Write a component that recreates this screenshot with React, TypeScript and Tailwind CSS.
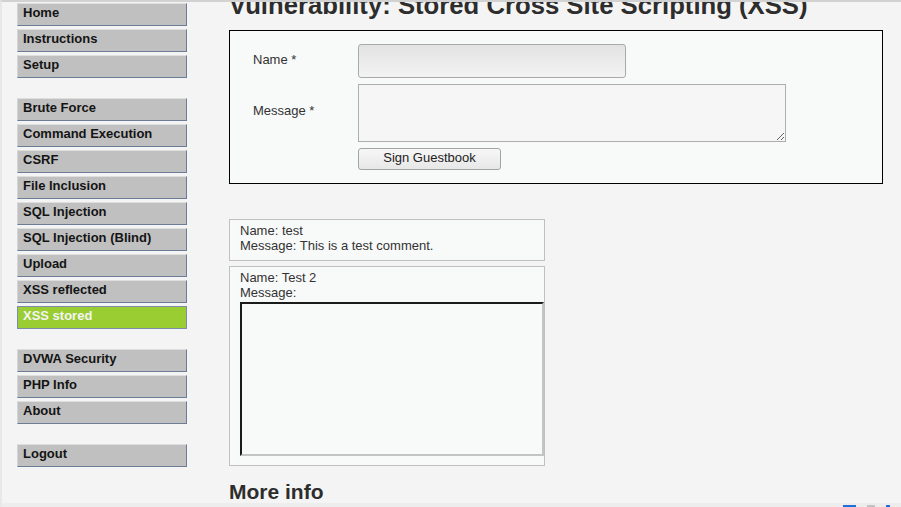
const menuGroups: string[][] = [
  ["Home", "Instructions", "Setup"],
  [
    "Brute Force",
    "Command Execution",
    "CSRF",
    "File Inclusion",
    "SQL Injection",
    "SQL Injection (Blind)",
    "Upload",
    "XSS reflected",
    "XSS stored",
  ],
  ["DVWA Security", "PHP Info", "About"],
  ["Logout"],
];

const ACTIVE = "XSS stored";

function MenuItem({ label }: { label: string }) {
  const active = label === ACTIVE;
  return (
    <div
      className={
        active
          ? "mb-[3px] flex h-[23px] w-[170px] items-center border border-[#7d8cab] bg-[#9acd32] pl-[5px] text-[13px] font-bold text-[#f4f4f4]"
          : "mb-[3px] flex h-[23px] w-[170px] items-center border-t border-l border-r border-b border-t-[#dedede] border-l-[#d4d4d4] border-r-[#6c7b96] border-b-[#6c7b96] bg-[#c0c0c0] pl-[5px] text-[13px] font-bold text-[#141414]"
      }
    >
      <span className="-mt-[4px] leading-[15px]">{label}</span>
    </div>
  );
}

export default function App() {
  return (
    <div className="flex h-[507px] w-[901px] flex-col overflow-hidden border-t-2 border-l-2 border-[#d2d2d2] border-l-[#e8e8e8] bg-[#f4f4f4] font-['Liberation_Sans',Arial,sans-serif] text-[13px] text-[#333]">
      <div className="flex h-[501px] overflow-hidden">
        {/* left menu */}
        <nav className="w-[185px] shrink-0 pl-[15px] pt-[1px]">
          {menuGroups.map((group, gi) => (
            <div key={gi} className={gi > 0 ? "mt-[20px]" : ""}>
              {group.map((item) => (
                <MenuItem key={item} label={item} />
              ))}
            </div>
          ))}
        </nav>

        {/* main body */}
        <main className="ml-[42px] flex w-[654px] shrink-0 flex-col">
          <h1 className="-mt-[12px] mb-[10px] whitespace-nowrap text-[25.7px] font-bold leading-[30px] text-[#2d2d2d]">
            Vulnerability: Stored Cross Site Scripting (XSS)
          </h1>

          <div className="border border-black bg-[#f8f9f9] pt-[13px] pb-[13px] pl-[23px]">
            <div className="grid grid-cols-[105px_1fr] gap-y-[6px]">
              <label className="pt-[8px] leading-[15px]">Name *</label>
              <div className="h-[34px] w-[268px] rounded-[3px] border border-[#a9a9a9] bg-linear-to-b from-[#e3e3e3] to-[#f3f3f3]" />

              <label className="pt-[19px] leading-[15px]">Message *</label>
              <textarea
                readOnly
                className="block h-[58px] w-[428px] resize border border-[#adadad] bg-[#f6f6f6]"
              />

              <div />
              <button className="h-[22px] w-[143px] rounded-[3px] border border-[#a3a3a3] bg-linear-to-b from-[#f7f7f7] to-[#e7e7e7] pb-[3px] text-[13px] leading-[15px] text-[#222]">
                Sign Guestbook
              </button>
            </div>
          </div>

          <div className="mt-[35px] w-[316px] border border-[#c0c0c0] bg-[#f8f9f9] pt-[3px] pb-[7px] pl-[10px] leading-[15px]">
            <div>Name: test</div>
            <div>Message: This is a test comment.</div>
          </div>

          <div className="mt-[5px] w-[316px] border border-[#c0c0c0] bg-[#f8f9f9] pt-[3px] pb-[9px] pl-[10px] leading-[15px]">
            <div>Name: Test 2</div>
            <div>Message:</div>
            <div className="mt-[2px] h-[154px] w-[304px] border-2 border-t-[#1b1b1b] border-l-[#1b1b1b] border-r-[#c4c4c4] border-b-[#c4c4c4] bg-[#f8f9f9]" />
          </div>

          <h2 className="mt-[14px] text-[21px] font-bold leading-[24px] text-[#2d2d2d]">
            More info
          </h2>
        </main>
      </div>

      {/* footer strip */}
      <div className="flex h-[4px] items-end justify-end gap-[11px] bg-[#ededed] pr-[11px]">
        <div className="h-[2px] w-[13px] bg-[#1e6fd8]" />
        <div className="h-[2px] w-[8px] bg-[#c2c2c2]" />
        <div className="h-[2px] w-[4px] bg-[#1e6fd8]" />
      </div>
    </div>
  );
}
